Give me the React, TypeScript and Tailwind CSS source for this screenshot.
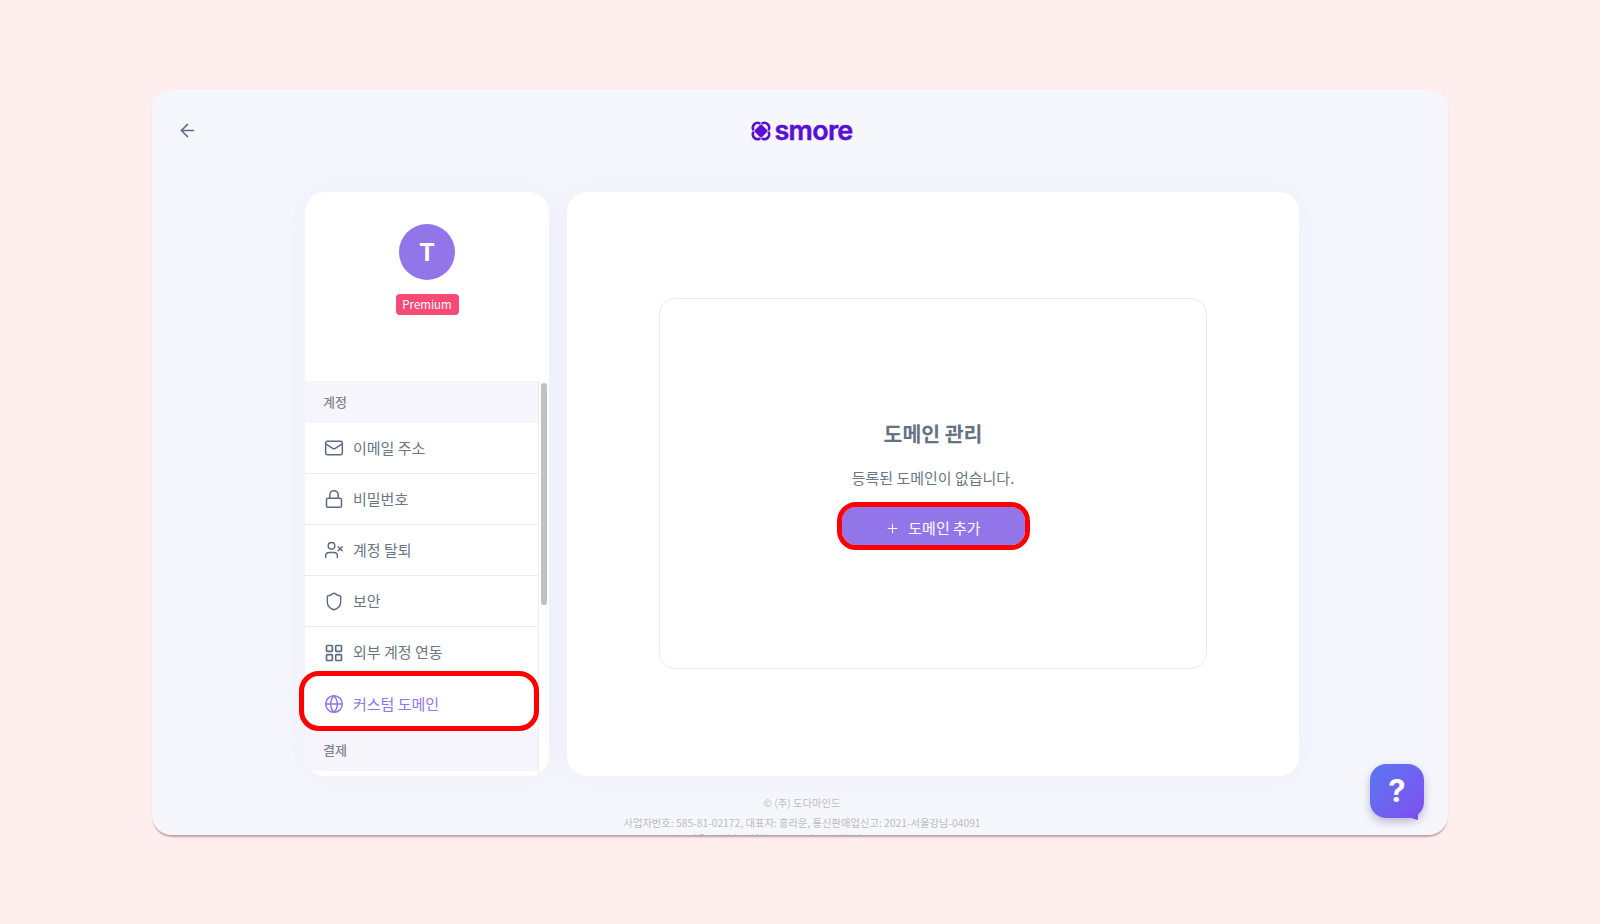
import React from "react";
import { ArrowLeft, Mail, Lock, UserX, Shield, LayoutGrid, Globe, Plus } from "lucide-react";

function Section({ label }: { label: string }) {
  return (
    <div className="h-[42px] shrink-0 bg-[#f7f5fc] pl-[18px] flex items-center text-[13px] font-medium text-[#7d8590]">
      {label}
    </div>
  );
}

function Row({ icon, label, last }: { icon: React.ReactNode; label: string; last?: boolean }) {
  return (
    <div className={`h-[51px] shrink-0 flex items-center pl-[19px] gap-[9px] text-[15px] text-[#6b7686] ${last ? "" : "border-b border-[#e9ebee]"}`}>
      <span className="w-[20px] h-[20px] shrink-0 flex items-center justify-center text-[#5d6b82]">{icon}</span>
      <span>{label}</span>
    </div>
  );
}

function SmoreIcon() {
  return (
    <svg width="20" height="20" viewBox="0 0 20 20" fill="none" stroke="#5a0fd6" strokeWidth="2.6" strokeLinecap="round">
      <path d="M2.2 8.4C.6 4.6 4.6.6 8.4 2.2" />
      <path d="M11.6 2.2C15.4.6 19.4 4.6 17.8 8.4" />
      <path d="M17.8 11.6C19.4 15.4 15.4 19.4 11.6 17.8" />
      <path d="M8.4 17.8C4.6 19.4.6 15.4 2.2 11.6" />
      <rect x="5" y="5" width="10" height="10" rx="1.5" transform="rotate(45 10 10)" fill="#5a0fd6" stroke="none" />
    </svg>
  );
}

export default function App() {
  return (
    <div className="h-[924px] w-[1600px] overflow-hidden bg-[#ffeeee] pt-[90px] pl-[152px] font-['Noto_Sans_CJK_KR','Noto_Sans',sans-serif]">
      <div className="relative w-[1296px] h-[745px] rounded-[20px] bg-[#f6f7fd] overflow-hidden shadow-[0_3px_2px_-1px_rgba(140,110,115,0.6)]">
        <header className="relative h-[102px] flex items-start justify-center pt-[30px] pl-[4px]">
          <ArrowLeft size={21} strokeWidth={1.7} className="absolute left-[25px] top-[30px] text-[#5d6b82]" />
          <div className="flex items-center gap-[3px]">
            <SmoreIcon />
            <span className="font-['Inter'] font-semibold text-[27px] leading-[22px] tracking-[-0.7px] [-webkit-text-stroke:0.5px_#5a0fd6] text-[#5a0fd6]">smore</span>
          </div>
        </header>

        <main className="flex justify-start pl-[153px] gap-[18px]">
          <aside className="w-[244px] h-[584px] rounded-[20px] bg-white overflow-hidden flex flex-col shadow-[0_0_30px_rgba(110,100,170,0.07)]">
            <div className="h-[189px] shrink-0 flex flex-col items-center pt-[32px]">
              <div className="w-[56px] h-[56px] rounded-full bg-[#9275e9] flex items-center justify-center pt-[2px] text-white text-[24px] font-bold font-['Inter']">T</div>
              <div className="mt-[14px] w-[63px] h-[21px] rounded-[4px] bg-[#f74a76] text-white text-[11.5px] flex items-center justify-center">Premium</div>
            </div>
            <div className="flex flex-1 min-h-0">
              <div className="w-[233px] flex flex-col overflow-hidden">
                <Section label="계정" />
                <Row icon={<Mail size={20} strokeWidth={1.8} />} label="이메일 주소" />
                <Row icon={<Lock size={20} strokeWidth={1.8} />} label="비밀번호" />
                <Row icon={<UserX size={22} strokeWidth={1.7} />} label="계정 탈퇴" />
                <Row icon={<Shield size={21} strokeWidth={1.7} />} label="보안" />
                <Row icon={<LayoutGrid size={20} strokeWidth={2} />} label="외부 계정 연동" last />
                <div className="h-[51px] shrink-0 flex items-center pl-[19px] pt-[1px] gap-[9px] text-[15px] text-[#9275e9]">
                  <Globe size={20} strokeWidth={1.8} className="shrink-0" />
                  <span>커스텀 도메인</span>
                </div>
                <Section label="결제" />
              </div>
              <div className="w-[11px] border-l border-[#eeeeee] pt-[2px] pl-[2px]">
                <div className="w-[6px] h-[222px] rounded-full bg-[#c1c1c1]" />
              </div>
            </div>
          </aside>

          <section className="w-[732px] h-[584px] rounded-[20px] bg-white flex items-center justify-center pb-[2px] shadow-[0_0_30px_rgba(110,100,170,0.07)]">
            <div className="w-[548px] h-[371px] rounded-[16px] border border-[#e9ebee] flex flex-col items-center justify-center pb-[3px]">
              <h2 className="text-[20.5px] font-bold leading-[28px] text-[#667284]">도메인 관리</h2>
              <p className="mt-[20px] text-[15px] leading-[22px] text-[#6b7686]">등록된 도메인이 없습니다.</p>
              <button className="mt-[18px] w-[183px] h-[38px] pt-[6px] rounded-[14px] bg-[#9275e9] text-white text-[15px] flex items-center justify-center gap-[8px] outline-[5px] outline-solid outline-[#ff0000]">
                <Plus size={15} strokeWidth={1.6} />
                <span>도메인 추가</span>
              </button>
            </div>
          </section>
        </main>

        <footer className="mt-[17px] pl-[4px] flex flex-col items-center text-[10.3px] leading-[20px] text-[#b9bcc3]">
          <div>© (주) 도다마인드</div>
          <div>사업자번호: 585-81-02172, 대표자: 홍라운, 통신판매업신고: 2021-서울강남-04091</div>
          <div className="-mt-[4px]">주소: 서울시 강남구 역삼로 000, 0층 · 전화번호: 000-0000-0000</div>
        </footer>

        {/* annotation over the active row */}
        <div className="absolute left-[147px] top-[581px] w-[240px] h-[60px] rounded-[20px] border-[5px] border-[#ff0000]" />

        {/* help bubble */}
        <div className="absolute left-[1218px] top-[674px] w-[54px] h-[54px] rounded-[16px] bg-gradient-to-br from-[#5578f2] to-[#7f4cf0] flex items-center justify-center text-white text-[31px] font-bold font-['Inter'] shadow-[0_4px_10px_rgba(70,70,130,0.35)]">
          ?
          <svg className="absolute right-[6px] -bottom-[2px]" width="14" height="6" viewBox="0 0 14 6"><path d="M0 0h14v6Q8 5 0 0z" fill="#7a4ff0" /></svg>
        </div>
      </div>
    </div>
  );
}
